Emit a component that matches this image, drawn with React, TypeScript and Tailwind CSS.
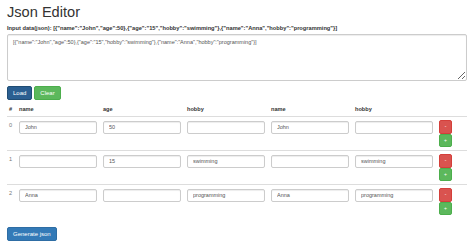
import React from 'react';

type Row = { name: string; age: string; hobby: string };

const rows: Row[] = [
  { name: 'John', age: '50', hobby: '' },
  { name: '', age: '15', hobby: 'swimming' },
  { name: 'Anna', age: '', hobby: 'programming' },
];

const json =
  '[{"name":"John","age":50},{"age":"15","hobby":"swimming"},{"name":"Anna","hobby":"programming"}]';

const Field = ({ value }: { value: string }) => (
  <input
    readOnly
    value={value}
    className="block h-[13px] w-[78px] rounded-[2px] border border-[#ccc] bg-white px-[5px] text-[5.5px] text-[#555] shadow-[inset_0_1px_1px_rgba(0,0,0,0.075)] outline-none"
  />
);

export default function App() {
  const cols = ['name', 'age', 'hobby', 'name', 'hobby'];

  return (
    <div
      className="min-h-[243px] w-[474px] bg-white px-[7px] text-[6px] leading-[8px] text-[#333]"
      style={{ fontFamily: '"Liberation Sans", Arial, sans-serif' }}
    >
      <h1 className="pt-[4px] pb-[3px] text-[14.6px] leading-[17px] font-normal">Json Editor</h1>

      <label className="block pb-[2px] text-[5.7px] leading-[8px] font-bold">
        Input data(json): {json}
      </label>

      <textarea
        readOnly
        value={json}
        className="block h-[47px] w-full rounded-[2px] border border-[#ccc] px-[5px] py-[3px] text-[5.5px] leading-[8px] text-[#555] shadow-[inset_0_1px_1px_rgba(0,0,0,0.075)] outline-none"
      />

      <div className="mt-[5px] flex gap-[2px]">
        <button className="h-[14px] rounded-[2px] border border-[#204d74] bg-[#2b5f91] px-[5px] text-[6px] text-white">
          Load
        </button>
        <button className="h-[14px] rounded-[2px] border border-[#4cae4c] bg-[#5cb85c] px-[5px] text-[6px] text-white">
          Clear
        </button>
      </div>

      <table className="mt-[1px] mb-[8px] w-[460px] table-fixed border-collapse text-[5.6px] leading-[8px]">
        <colgroup>
          <col className="w-[8.5px]" />
          {cols.map((_, i) => (
            <col key={i} className="w-[84px]" />
          ))}
          <col />
        </colgroup>
        <thead>
          <tr className="border-b border-[#ddd]">
            <th className="py-[3.5px] pl-[2px] text-left font-bold">#</th>
            {cols.map((c, i) => (
              <th key={i} className="px-[3.5px] py-[3.5px] text-left font-bold">
                {c}
              </th>
            ))}
            <th className="px-[3.5px]"></th>
          </tr>
        </thead>
        <tbody>
          {rows.map((r, i) => (
            <tr key={i} className="h-[34px] border-t border-[#ddd] align-top">
              <td className="pt-[4px] pl-[2px] text-[#777]">{i}</td>
              {[r.name, r.age, r.hobby, r.name, r.hobby].map((v, j) => (
                <td key={j} className="px-[3.5px] pt-[3.5px]">
                  <Field value={v} />
                </td>
              ))}
              <td className="px-[3.5px] pt-[3px]">
                <div className="flex flex-col">
                  <button className="flex h-[13.5px] w-[13px] items-center justify-center rounded-[2px] border border-[#d43f3a] bg-[#d9534f] text-[5px] leading-none text-white">
                    -
                  </button>
                  <button className="flex h-[13.5px] w-[13px] items-center justify-center rounded-[2px] border border-[#4cae4c] bg-[#5cb85c] text-[5px] leading-none text-white">
                    +
                  </button>
                </div>
              </td>
            </tr>
          ))}
        </tbody>
      </table>

      <div className="flex">
        <button className="h-[14px] rounded-[2px] border border-[#2e6da4] bg-[#337ab7] px-[5px] text-[6px] text-white">
          Generate json
        </button>
      </div>
    </div>
  );
}
